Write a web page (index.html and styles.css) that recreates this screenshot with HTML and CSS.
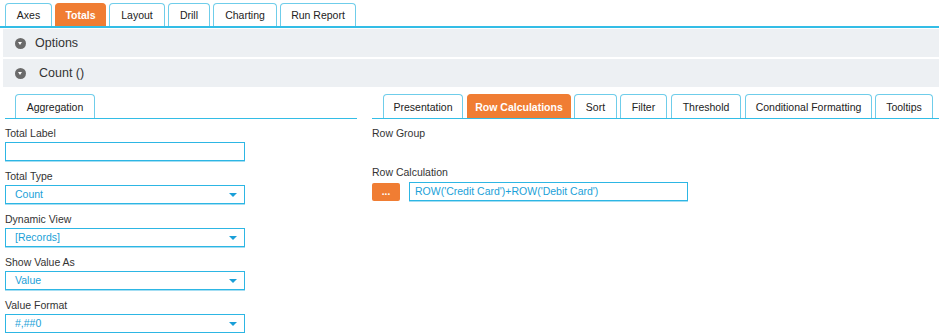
FILE: index.html
```html
<!DOCTYPE html>
<html lang="en">
<head>
    <meta charset="UTF-8">
    <title>Totals</title>
    <link rel="stylesheet" href="styles.css">
</head>
<body>
    <div class="tabs top-tabs">
        <div class="tab t-axes">Axes</div>
        <div class="tab t-totals active">Totals</div>
        <div class="tab t-layout">Layout</div>
        <div class="tab t-drill">Drill</div>
        <div class="tab t-charting">Charting</div>
        <div class="tab t-run">Run Report</div>
    </div>

    <div class="bar"><span class="toggle"></span><span class="bar-title">Options</span></div>
    <div class="bar bar-count"><span class="toggle"></span><span class="bar-title">Count ()</span></div>

    <div class="panels">
        <div class="panel left">
            <div class="tabs sub-tabs">
                <div class="tab t-agg">Aggregation</div>
            </div>

            <div class="field">
                <label>Total Label</label>
                <div class="input"></div>
            </div>
            <div class="field">
                <label>Total Type</label>
                <div class="input select">Count</div>
            </div>
            <div class="field">
                <label>Dynamic View</label>
                <div class="input select">[Records]</div>
            </div>
            <div class="field">
                <label>Show Value As</label>
                <div class="input select">Value</div>
            </div>
            <div class="field">
                <label>Value Format</label>
                <div class="input select">#,##0</div>
            </div>
        </div>

        <div class="panel right">
            <div class="tabs sub-tabs">
                <div class="tab t-pres">Presentation</div>
                <div class="tab t-rowcalc active">Row Calculations</div>
                <div class="tab t-sort">Sort</div>
                <div class="tab t-filter">Filter</div>
                <div class="tab t-thresh">Threshold</div>
                <div class="tab t-cond">Conditional Formatting</div>
                <div class="tab t-tips">Tooltips</div>
            </div>

            <div class="field">
                <label>Row Group</label>
            </div>
            <div class="field calc">
                <label>Row Calculation</label>
                <div class="calc-row">
                    <button class="dots">...</button>
                    <div class="input formula">ROW('Credit Card')+ROW('Debit Card')</div>
                </div>
            </div>
        </div>
    </div>
</body>
</html>
```

FILE: styles.css
```css
body {
    margin: 0;
    font-family: "Liberation Sans", Arial, sans-serif;
    font-size: 11px;
    color: #222;
    background: #fff;
}

.tabs {
    display: flex;
    align-items: flex-end;
}

.top-tabs {
    padding: 3px 0 0 5px;
    gap: 3px;
    border-bottom: 2px solid #33bde6;
}

.tab {
    box-sizing: border-box;
    height: 23px;
    line-height: 23px;
    border: 1px solid #6fcdea;
    border-bottom: none;
    border-radius: 4px 4px 0 0;
    background: #fff;
    color: #222;
    font-size: 10.5px;
    text-align: center;
    white-space: nowrap;
}

.tab.active {
    background: #f07d33;
    border-color: #f07d33;
    color: #fff;
    font-weight: bold;
}

.t-axes { width: 47px; }
.t-totals { width: 51px; }
.t-layout { width: 56px; }
.t-drill { width: 42px; }
.t-charting { width: 64px; }
.t-run { width: 76px; }

.bar {
    display: flex;
    align-items: center;
    height: 28px;
    margin: 1px 0 0 3px;
    padding-left: 12px;
    background: #edf0f3;
    font-size: 12.5px;
    color: #333;
}

.bar-count {
    margin-top: 2px;
}

.bar-count .bar-title {
    margin-left: 4px;
}

.toggle {
    position: relative;
    width: 11px;
    height: 11px;
    border-radius: 50%;
    background: #6b6b6b;
    margin-right: 9px;
}

.toggle::after {
    content: "";
    position: absolute;
    left: 3px;
    top: 4px;
    border-left: 2.5px solid transparent;
    border-right: 2.5px solid transparent;
    border-top: 3px solid #fff;
}

.panels {
    display: flex;
    gap: 15px;
    margin-top: 7px;
    padding-left: 5px;
}

.panel.left {
    flex: 0 0 352px;
}

.panel.right {
    flex: 1;
    min-width: 0;
}

.sub-tabs {
    border-bottom: 1px solid #33bde6;
}

.sub-tabs .tab {
    height: 24px;
    line-height: 24px;
}

.left .sub-tabs {
    padding-left: 10px;
}

.right .sub-tabs {
    padding-left: 11px;
    gap: 3px;
}

.t-agg { width: 80px; }
.t-pres { width: 80px; }
.t-rowcalc { width: 104px; margin-left: 1px; }
.t-sort { width: 43px; }
.t-filter { width: 47px; }
.t-thresh { width: 70px; margin-left: 1px; }
.t-cond { width: 127px; margin-left: 1px; }
.t-tips { width: 58px; }

.field {
    margin-top: 7px;
}

.field + .field {
    margin-top: 8px;
}

.field label {
    display: block;
    height: 15px;
    line-height: 15px;
    margin-bottom: 1px;
    font-size: 10.5px;
    color: #333;
}

.input {
    box-sizing: border-box;
    width: 240px;
    height: 19px;
    border: 1px solid #2db6e4;
    box-shadow: 0 1px 0 #a4def3;
    color: #1a9fd8;
    font-size: 10.5px;
    line-height: 17px;
    padding-left: 9px;
    background: #fff;
}

.select {
    position: relative;
}

.select::after {
    content: "";
    position: absolute;
    right: 7px;
    top: 7px;
    border-left: 4px solid transparent;
    border-right: 4px solid transparent;
    border-top: 4px solid #1a9fd8;
}

.field.calc {
    margin-top: 24px;
}

.calc-row {
    display: flex;
    align-items: center;
    gap: 9px;
    margin-top: 2px;
}

.dots {
    width: 28px;
    height: 18px;
    padding: 0;
    border: none;
    border-radius: 2px;
    background: #f07d33;
    color: #fff;
    font-family: inherit;
    font-size: 10px;
    font-weight: bold;
    line-height: 14px;
}

.formula {
    width: 279px;
    padding-left: 5px;
}
```
